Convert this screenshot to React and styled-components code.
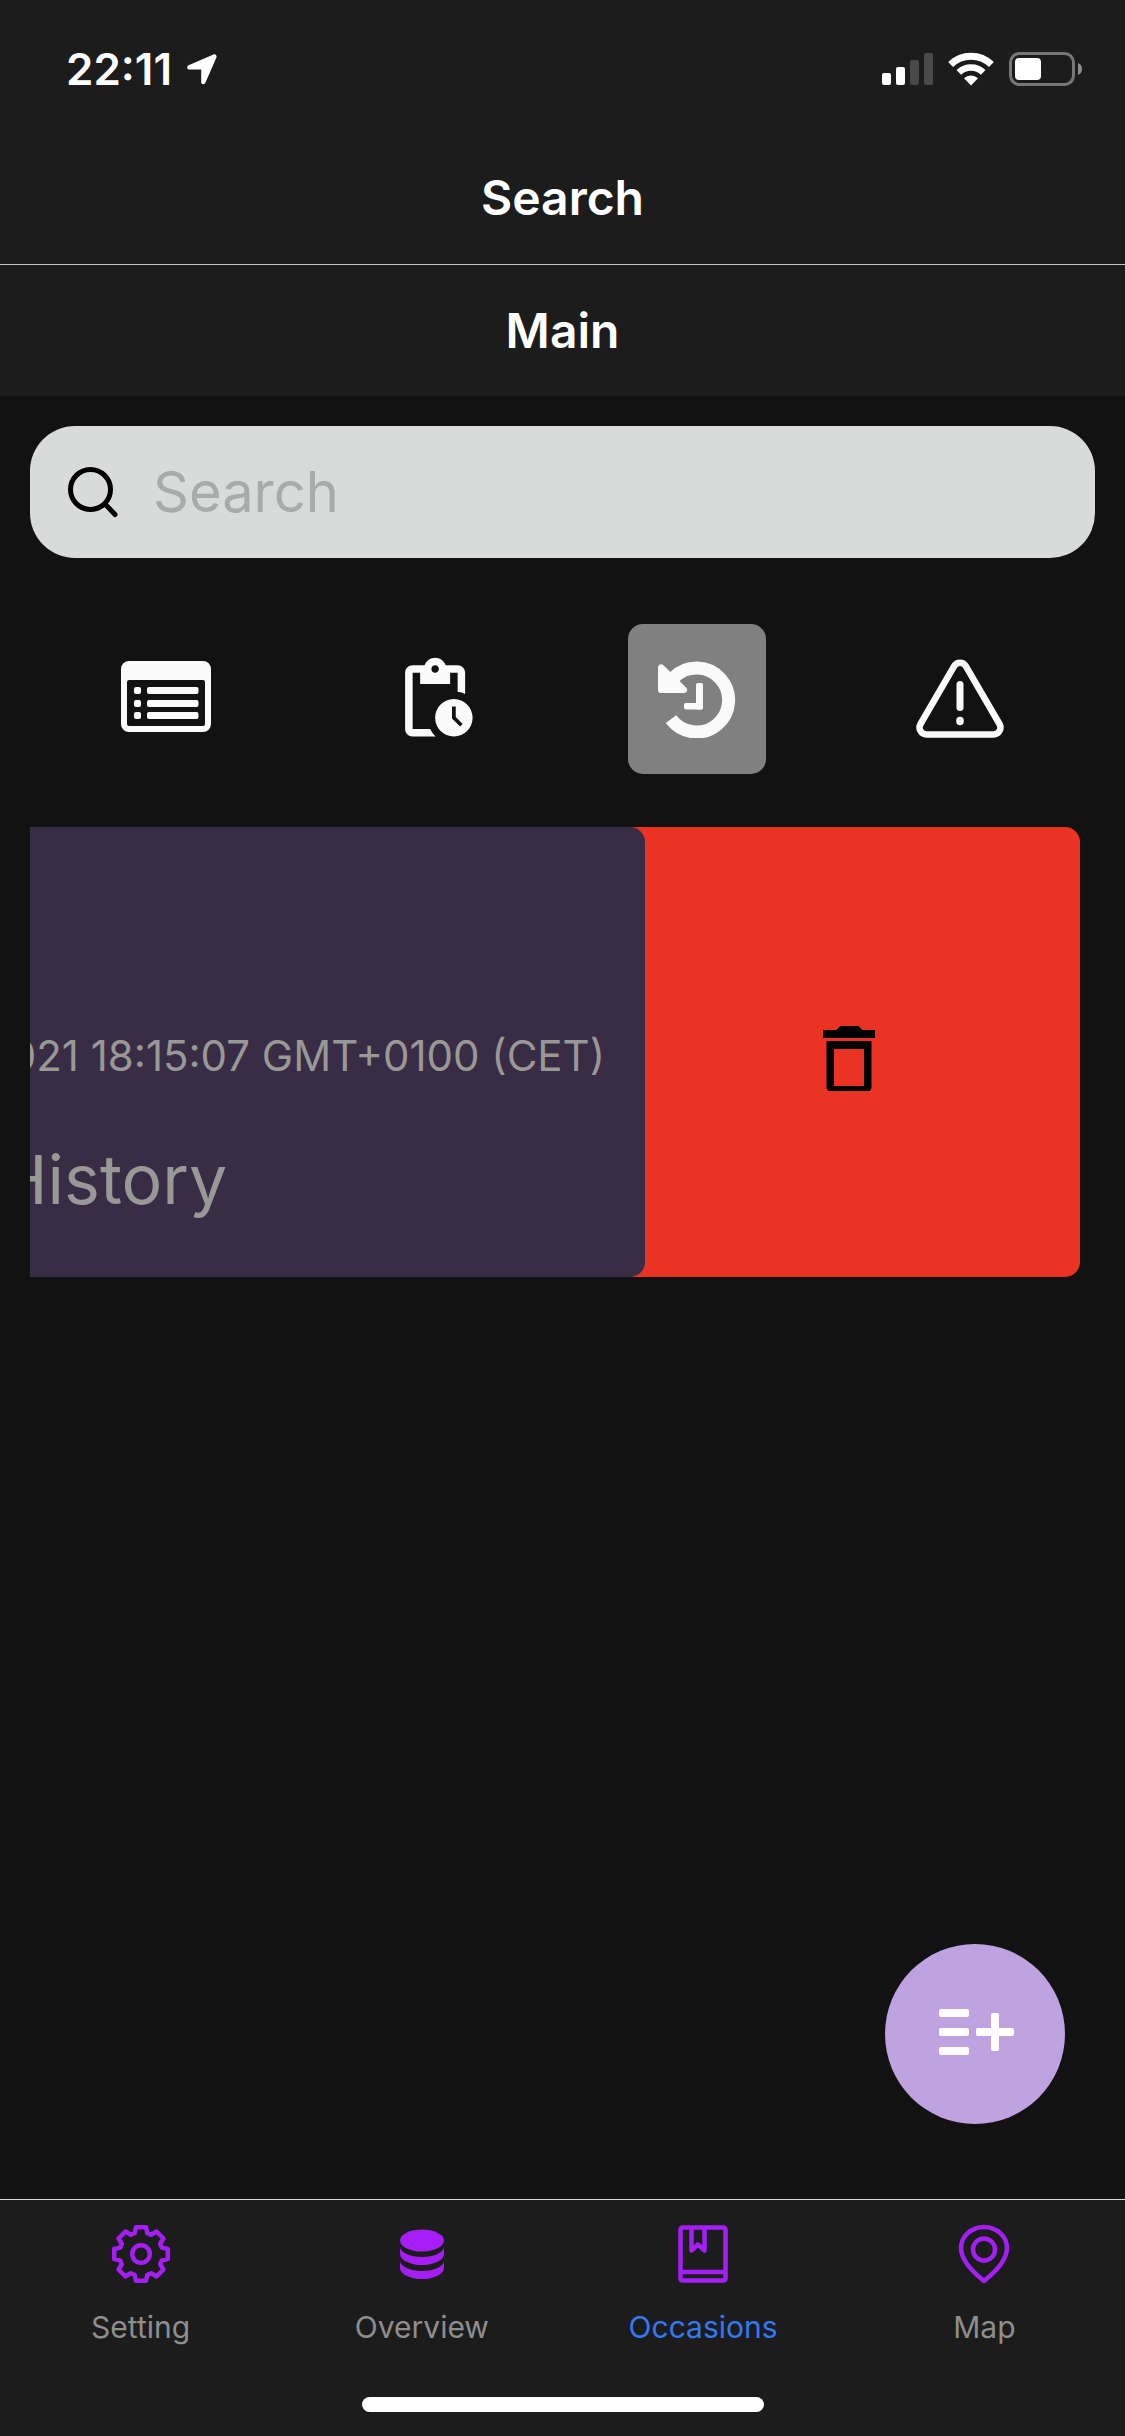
import React from "react";
import styled, { createGlobalStyle, css } from "styled-components";
import { MdPendingActions } from "react-icons/md";

const GlobalStyle = createGlobalStyle`
  *, *::before, *::after { box-sizing: border-box; }
  body {
    margin: 0;
    background: #121212;
    font-family: Inter, "Liberation Sans", sans-serif;
    color: #fff;
  }
  button { border: 0; padding: 0; background: none; font: inherit; color: inherit; cursor: pointer; }
  svg { display: block; }
`;

const Screen = styled.div`
  min-height: 100vh;
  display: flex;
  flex-direction: column;
`;

const StatusBar = styled.div`
  height: 132px;
  padding: 6px 42px 0 66px;
  display: flex;
  align-items: center;
  justify-content: space-between;
  background: #1c1c1c;
`;

const StatusGroup = styled.div`
  display: flex;
  align-items: center;
  gap: 15px;
`;

const Clock = styled.span`
  font-size: 44px;
  line-height: 54px;
  font-weight: 600;
`;

const TitleBar = styled.header`
  height: 131px;
  display: flex;
  align-items: center;
  justify-content: center;
  background: #1c1c1c;
  ${({ $divided }) => $divided && css`
    height: 133px;
    border-bottom: 1px solid #c4c6c5;
  `}
`;

const Title = styled.h1`
  margin: 0;
  font-size: 48px;
  line-height: 60px;
  font-weight: 600;
`;

const Content = styled.main`
  position: relative;
  flex: 1;
  padding: 30px;
`;

const SearchBox = styled.label`
  height: 132px;
  padding: 0 36px;
  display: flex;
  align-items: center;
  gap: 33px;
  border-radius: 45px;
  background: #d9dbda;
  color: #000;
`;

const SearchInput = styled.input`
  flex: 1;
  min-width: 0;
  padding: 0;
  border: 0;
  outline: 0;
  background: transparent;
  color: #000;
  font-family: inherit;
  font-size: 56px;
  line-height: 72px;
  &::placeholder { color: #a9abaa; opacity: 1; }
`;

const Filters = styled.div`
  margin-top: 66px;
  padding-left: 3px;
  display: grid;
  grid-template-columns: repeat(4, 1fr);
  justify-items: center;
`;

const FilterButton = styled.button`
  width: 138px;
  height: 150px;
  display: grid;
  place-items: center;
  border-radius: 15px;
  color: #fafafa;
  background: ${({ $active }) => ($active ? "#808080" : "transparent")};
`;

const SwipeRow = styled.article`
  margin: 53px 15px 0 0;
  height: 450px;
  display: flex;
`;

const Card = styled.div`
  z-index: 1;
  flex: 1;
  min-width: 0;
  margin-right: -27px;
  padding: 202px 40px 0 0;
  overflow: hidden;
  border-radius: 0 15px 15px 0;
  background: #382d45;
  color: #999896;
`;

const CardDate = styled.p`
  margin: 0;
  display: flex;
  justify-content: flex-end;
  white-space: nowrap;
  font-size: 42px;
  line-height: 54px;
`;

const CardTitle = styled.h2`
  margin: 52px 0 0 -33px;
  font-size: 68px;
  line-height: 88px;
  font-weight: 400;
`;

const DeleteButton = styled.button`
  width: 462px;
  display: grid;
  place-items: center;
  border-radius: 15px;
  background: #ea3323;
  color: #000;
`;

const AddButton = styled.button`
  position: absolute;
  right: 60px;
  bottom: 75px;
  width: 180px;
  height: 180px;
  display: grid;
  place-items: center;
  border-radius: 50%;
  background: #bfa2e0;
  color: #fff;
`;

const TabBar = styled.nav`
  height: 237px;
  display: flex;
  flex-direction: column;
  justify-content: space-between;
  align-items: center;
  padding-bottom: 24px;
  border-top: 1px solid #d9dbda;
  background: #1c1c1c;
`;

const Tabs = styled.div`
  width: 100%;
  padding-top: 24px;
  display: grid;
  grid-template-columns: repeat(4, 1fr);
`;

const Tab = styled.a`
  display: flex;
  flex-direction: column;
  align-items: center;
  gap: 25px;
  font-size: 30px;
  line-height: 36px;
  text-decoration: none;
  color: ${({ $active }) => ($active ? "#3478f6" : "#8e8e8e")};
`;

const HomeIndicator = styled.div`
  width: 402px;
  height: 15px;
  border-radius: 8px;
  background: #fff;
`;

const LocationIcon = () => (
  <svg width="30" height="31" viewBox="0 0 30 31" fill="#fff" aria-hidden="true">
    <path d="M26.5.4 1.6 11.2C-.5 12.200-.3 15.500 2 15.500h12.200v12.400c0 2.600 3.200 3 4.200.8L29.400 3.500C30.200 1.500 28.500-.4 26.500.4z" />
  </svg>
);

const SignalIcon = () => (
  <svg width="51" height="34" viewBox="0 0 51 34" fill="#fff" aria-hidden="true">
    <rect x="0" y="21" width="9" height="12" rx="2" />
    <rect x="14" y="15" width="9" height="18" rx="2" />
    <rect x="28" y="8" width="9" height="25" rx="2" fill="#494949" />
    <rect x="42" y="1" width="9" height="32" rx="2" fill="#494949" />
  </svg>
);

const WifiIcon = () => (
  <svg width="46" height="34" viewBox="0 0 46 34" fill="none" stroke="#fff" aria-hidden="true">
    <path d="M2.600 12.500A29.400 29.400 0 0 1 43.400 12.500" strokeWidth="7" />
    <path d="M10.800 20.400A17.600 17.600 0 0 1 35.200 20.400" strokeWidth="6.500" />
    <path d="M23 33.500 16 26.300a10 10 0 0 1 14 0z" fill="#fff" stroke="none" />
  </svg>
);

const BatteryIcon = () => (
  <svg width="74" height="34" viewBox="0 0 74 34" aria-hidden="true">
    <rect x="1.500" y="1.500" width="63" height="31" rx="9" fill="none" stroke="#777" strokeWidth="3" />
    <rect x="6" y="6" width="26" height="22" rx="4" fill="#fff" />
    <path d="M69 11a6.500 6.500 0 0 1 0 12z" fill="#8e8e8e" />
  </svg>
);

const SearchIcon = () => (
  <svg width="54" height="54" viewBox="0 0 54 54" fill="none" stroke="currentColor" strokeWidth="5" strokeLinecap="round" aria-hidden="true">
    <circle cx="24.500" cy="24.500" r="20" />
    <path d="M39 39l10 10.500" />
  </svg>
);

const ListIcon = () => (
  <svg width="90" height="76" viewBox="0 0 90 76" fill="currentColor" aria-hidden="true">
    <path fillRule="evenodd" d="M8 0h74a8 8 0 0 1 8 8v55a8 8 0 0 1-8 8H8a8 8 0 0 1-8-8V8a8 8 0 0 1 8-8zm0 19a2 2 0 0 0-2 2v42a2 2 0 0 0 2 2h74a2 2 0 0 0 2-2V21a2 2 0 0 0-2-2z" />
    {[26, 39, 51].map((y) => (
      <g key={y}>
        <rect x="13" y={y} width="7" height="7" rx="2" />
        <rect x="26" y={y} width="51.500" height="7" rx="2" />
      </g>
    ))}
  </svg>
);

const PendingIcon = () => <MdPendingActions size={90} viewBox="-1.1 0 24 24" aria-hidden="true" />;

const HistoryIcon = () => (
  <svg width="78" height="78" viewBox="0 0 78 78" fill="currentColor" aria-hidden="true">
    <path d="M16 17.400A32 32 0 1 1 13 59.200" fill="none" stroke="currentColor" strokeWidth="13" />
    <path d="M0 7.500c0-3 3.300-4.500 5.500-2.300L28 27.500c2.200 2.200 1 5.500-2 5.500H3a3 3 0 0 1-3-3z" />
    <rect x="38" y="23" width="7" height="26.500" rx="2" />
    <rect x="26" y="43" width="19" height="6.500" rx="2" />
  </svg>
);

const WarningIcon = () => (
  <svg width="93" height="80" viewBox="0 0 93 80" fill="none" stroke="currentColor" strokeLinecap="round" strokeLinejoin="round" aria-hidden="true">
    <path d="M10.500 75.500h67a7 7 0 0 0 6-10.500L50 7.300c-2.700-4.700-9.300-4.700-12 0L4.500 65a7 7 0 0 0 6 10.500z" strokeWidth="6.500" />
    <path d="M44 25.500v23" strokeWidth="7" />
    <path d="M44 61.500v1" strokeWidth="7.500" />
  </svg>
);

const TrashIcon = () => (
  <svg width="54" height="80" viewBox="0 -14 54 80" fill="currentColor" aria-hidden="true">
    <path d="M1 4h13.500l4-4h18l4 4H53v8H1z" />
    <path fillRule="evenodd" d="M4.500 15h45v45.500a5 5 0 0 1-2 4.500h-41a5 5 0 0 1-2-4.500zm7.500 8v37h30V23z" />
  </svg>
);

const AddListIcon = () => (
  <svg width="78" height="50" viewBox="0 0 78 50" fill="currentColor" aria-hidden="true">
    <rect x="3" y="0" width="30" height="8" rx="2" />
    <rect x="3" y="19" width="30" height="8" rx="2" />
    <rect x="3" y="38" width="30" height="8" rx="2" />
    <rect x="40" y="19" width="38" height="8" rx="2" />
    <rect x="55" y="4" width="8" height="38" rx="2" />
  </svg>
);

const tabIcon = { width: 60, height: 60, viewBox: "0 0 60 60", fill: "none", stroke: "#a41ef5", "aria-hidden": true };

const gearPath = (() => {
  const points = [];
  for (let i = 0; i < 8; i += 1) {
    [[-17, 21.800], [-10.500, 27.300], [10.500, 27.300], [17, 21.800]].forEach(([deg, r]) => {
      const a = ((i * 45 + deg - 90) * Math.PI) / 180;
      points.push(`${(30 + r * Math.cos(a)).toFixed(1)} ${(30 + r * Math.sin(a)).toFixed(1)}`);
    });
  }
  return `M${points.join("L")}z`;
})();

const GearIcon = () => (
  <svg {...tabIcon} strokeWidth="4.500">
    <path d={gearPath} strokeLinejoin="round" />
    <circle cx="30" cy="30" r="8.800" />
  </svg>
);

const DatabaseIcon = () => (
  <svg {...tabIcon} fill="#a41ef5" stroke="none">
    <ellipse cx="30" cy="16.500" rx="22" ry="11" />
    <path d="M8 22.500a22 10.500 0 0 0 44 0V30a22 11 0 0 1-44 0z" />
    <path d="M8 36.500a22 10.500 0 0 0 44 0V44a22 11 0 0 1-44 0z" />
  </svg>
);

const BookIcon = () => (
  <svg {...tabIcon} strokeWidth="4.500" strokeLinejoin="round">
    <rect x="7.500" y="3.500" width="45" height="53" rx="2" />
    <path d="M7.500 48h45M18.500 4v22.500l6.500-6 6.500 6V4" />
  </svg>
);

const PinIcon = () => (
  <svg {...tabIcon} strokeWidth="4.500" strokeLinejoin="round">
    <path d="M30 57C20 49 7 37 7 24a23 21 0 0 1 46 0c0 13-13 25-23 33z" />
    <circle cx="30" cy="25.500" r="11" />
  </svg>
);

const filters = [
  { label: "All occasions", Icon: ListIcon },
  { label: "Pending", Icon: PendingIcon },
  { label: "History", Icon: HistoryIcon, active: true },
  { label: "Warnings", Icon: WarningIcon },
];

const tabs = [
  { label: "Setting", Icon: GearIcon },
  { label: "Overview", Icon: DatabaseIcon },
  { label: "Occasions", Icon: BookIcon, active: true },
  { label: "Map", Icon: PinIcon },
];

export default function App() {
  return (
    <Screen>
      <GlobalStyle />
      <StatusBar>
        <StatusGroup>
          <Clock>22:11</Clock>
          <LocationIcon />
        </StatusGroup>
        <StatusGroup>
          <SignalIcon />
          <WifiIcon />
          <BatteryIcon />
        </StatusGroup>
      </StatusBar>
      <TitleBar $divided>
        <Title>Search</Title>
      </TitleBar>
      <TitleBar>
        <Title as="h2">Main</Title>
      </TitleBar>
      <Content>
        <SearchBox>
          <SearchIcon />
          <SearchInput type="search" placeholder="Search" aria-label="Search" />
        </SearchBox>
        <Filters>
          {filters.map(({ label, Icon, active }) => (
            <FilterButton key={label} type="button" aria-label={label} aria-pressed={!!active} $active={active}>
              <Icon />
            </FilterButton>
          ))}
        </Filters>
        <SwipeRow>
          <Card>
            <CardDate>021 18:15:07 GMT+0100 (CET)</CardDate>
            <CardTitle>History</CardTitle>
          </Card>
          <DeleteButton type="button" aria-label="Delete">
            <TrashIcon />
          </DeleteButton>
        </SwipeRow>
        <AddButton type="button" aria-label="Add to list">
          <AddListIcon />
        </AddButton>
      </Content>
      <TabBar>
        <Tabs>
          {tabs.map(({ label, Icon, active }) => (
            <Tab key={label} href={`#${label.toLowerCase()}`} $active={active}>
              <Icon />
              {label}
            </Tab>
          ))}
        </Tabs>
        <HomeIndicator />
      </TabBar>
    </Screen>
  );
}
